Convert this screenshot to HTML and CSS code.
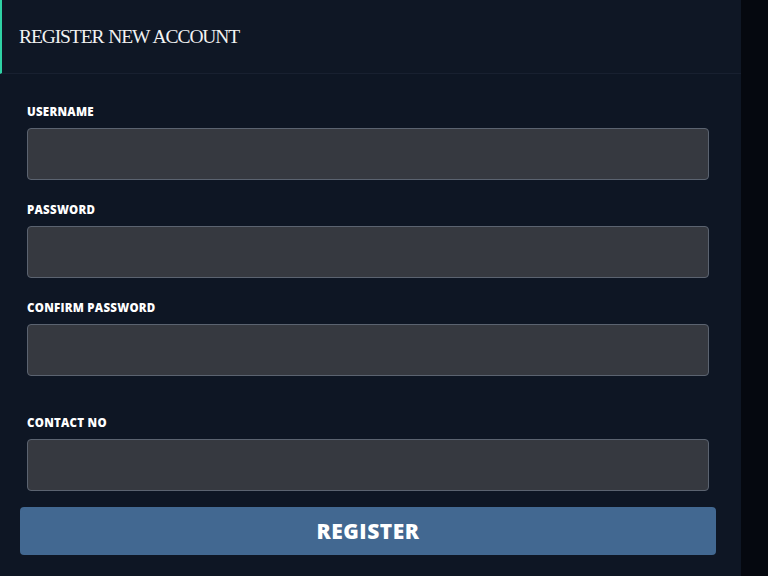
FILE: index.html
```html
<!DOCTYPE html>
<html lang="en">
<head>
<meta charset="utf-8">
<title>Register New Account</title>
<link rel="stylesheet" href="styles.css">
</head>
<body>
<div class="page">
  <section class="panel">
    <header class="panel-header">
      <h1 class="panel-title">REGISTER NEW ACCOUNT</h1>
    </header>
    <form class="form">
      <div class="field">
        <label class="field-label" for="username">USERNAME</label>
        <input class="field-input" id="username" type="text">
      </div>
      <div class="field">
        <label class="field-label" for="password">PASSWORD</label>
        <input class="field-input" id="password" type="password">
      </div>
      <div class="field">
        <label class="field-label" for="confirm">CONFIRM PASSWORD</label>
        <input class="field-input" id="confirm" type="password">
      </div>
      <div class="field field-spaced">
        <label class="field-label" for="contact">CONTACT NO</label>
        <input class="field-input" id="contact" type="text">
      </div>
      <button class="btn-register" type="button">REGISTER</button>
    </form>
  </section>
</div>
</body>
</html>
```

FILE: styles.css
```css
html, body {
  margin: 0;
  padding: 0;
  height: 100%;
}
body {
  background: #05080f;
  font-family: "Open Sans", "DejaVu Sans", sans-serif;
  overflow: hidden;
}
.page {
  display: flex;
  height: 100%;
}
.panel {
  width: 741px;
  background: #0e1624;
  border-top-right-radius: 5px;
  min-height: 100%;
}
.panel-header {
  height: 73px;
  border-left: 2px solid #2fd1a5;
  border-bottom: 1px solid #182030;
  display: flex;
  align-items: center;
  padding-left: 17px;
  background: #0f1725;
}
.panel-title {
  margin: 0;
  font-family: "Liberation Serif", "Times New Roman", serif;
  font-weight: normal;
  font-size: 19.5px;
  color: #f2f2f2;
  letter-spacing: -1.1px;
  word-spacing: 1px;
}
.form {
  padding: 30px 0 0 20px;
  display: flex;
  flex-direction: column;
}
.field {
  display: flex;
  flex-direction: column;
  padding-left: 7px;
  margin-bottom: 22px;
}
.field-spaced {
  margin-top: 17px;
  margin-bottom: 16px;
}
.field-label {
  font-family: "Open Sans", "DejaVu Sans", sans-serif;
  font-weight: 800;
  font-size: 11.5px;
  line-height: 15px;
  color: #ffffff;
  margin-bottom: 9px;
  letter-spacing: 0.25px;
}
.field-input {
  width: 682px;
  height: 52px;
  box-sizing: border-box;
  background: #363940;
  border: 1px solid #5b6370;
  border-radius: 4px;
  margin: 0;
  padding: 0 12px;
  color: #fff;
  font-size: 14px;
  outline: none;
}
.btn-register {
  width: 696px;
  height: 48px;
  background: #426891;
  border: none;
  border-radius: 4px;
  color: #ffffff;
  font-family: "Open Sans", "DejaVu Sans", sans-serif;
  font-weight: 800;
  font-size: 21px;
  letter-spacing: 0.5px;
  padding: 0;
  cursor: pointer;
}
```
